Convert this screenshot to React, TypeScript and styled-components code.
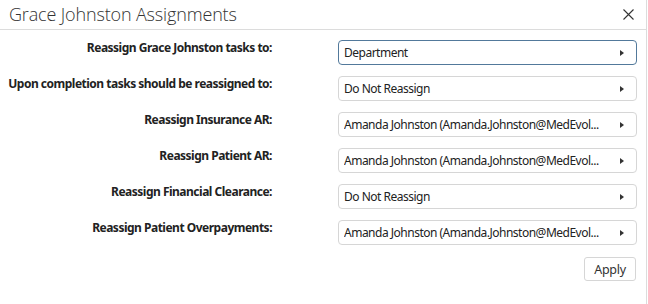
import React from 'react';
import styled, { createGlobalStyle } from 'styled-components';

const GlobalStyle = createGlobalStyle`
  html, body {
    margin: 0;
    padding: 0;
    background: #ffffff;
  }
  body {
    font-family: 'Noto Sans', 'Open Sans', sans-serif;
    color: #222222;
  }
`;

const Dialog = styled.div`
  width: 646px;
  height: 304px;
  background: #ffffff;
  border-right: 1px solid #dcdcdc;
  display: flex;
  flex-direction: column;
`;

const Header = styled.div`
  height: 29px;
  border-bottom: 1px solid #dcdcdc;
  display: flex;
  align-items: center;
  justify-content: space-between;
  padding: 0 12px 0 9px;
`;

const Title = styled.h1`
  margin: 0;
  font-family: 'Open Sans', 'Noto Sans', sans-serif;
  font-size: 18px;
  font-weight: 300;
  letter-spacing: -0.15px;
  color: #333333;
  line-height: 29px;
`;

const CloseButton = styled.button`
  width: 12px;
  height: 12px;
  padding: 0;
  border: none;
  background: none;
  display: flex;
  align-items: center;
  justify-content: center;
  cursor: pointer;
`;

const Body = styled.div`
  display: grid;
  grid-template-columns: 264px 299px;
  column-gap: 66px;
  row-gap: 11px;
  grid-auto-rows: 25px;
  padding: 10px 0 0 8px;
`;

const Label = styled.label`
  align-self: start;
  text-align: right;
  font-size: 12px;
  font-weight: 700;
  letter-spacing: -0.5px;
  line-height: 16px;
  color: #222222;
  white-space: nowrap;
`;

const Select = styled.div<{ $focused?: boolean }>`
  box-sizing: border-box;
  height: 25px;
  border: 1px solid ${p => (p.$focused ? '#52799b' : '#d6d6d6')};
  border-radius: 4px;
  display: flex;
  align-items: center;
  padding: 0 12px 0 5px;
  font-size: 12px;
  letter-spacing: -0.5px;
  color: #222222;
  cursor: pointer;
`;

const SelectText = styled.span`
  flex: 1;
  overflow: hidden;
  white-space: nowrap;
  text-overflow: ellipsis;
`;

const Arrow = styled.span`
  width: 0;
  height: 0;
  border-top: 3px solid transparent;
  border-bottom: 3px solid transparent;
  border-left: 4px solid #333333;
  margin-left: 6px;
`;

const Footer = styled.div`
  display: flex;
  justify-content: flex-end;
  padding: 12px 10px 0 0;
`;

const ApplyButton = styled.button`
  box-sizing: border-box;
  width: 52px;
  height: 24px;
  border: 1px solid #d6d6d6;
  border-radius: 3px;
  background: #ffffff;
  font-family: 'Noto Sans', 'Open Sans', sans-serif;
  font-size: 12.5px;
  letter-spacing: -0.3px;
  color: #333333;
  padding: 0;
  cursor: pointer;
`;

const rows = [
  { label: 'Reassign Grace Johnston tasks to:', value: 'Department', focused: true },
  { label: 'Upon completion tasks should be reassigned to:', value: 'Do Not Reassign' },
  { label: 'Reassign Insurance AR:', value: 'Amanda Johnston (Amanda.Johnston@MedEvol...' },
  { label: 'Reassign Patient AR:', value: 'Amanda Johnston (Amanda.Johnston@MedEvol...' },
  { label: 'Reassign Financial Clearance:', value: 'Do Not Reassign' },
  { label: 'Reassign Patient Overpayments:', value: 'Amanda Johnston (Amanda.Johnston@MedEvol...' },
];

const App: React.FC = () => (
  <>
    <GlobalStyle />
    <Dialog>
      <Header>
        <Title>Grace Johnston Assignments</Title>
        <CloseButton aria-label="Close">
          <svg width="11" height="11" viewBox="0 0 11 11">
            <path d="M0.5 0.5 L10.5 10.5 M10.5 0.5 L0.5 10.5" stroke="#333" strokeWidth="1.1" />
          </svg>
        </CloseButton>
      </Header>
      <Body>
        {rows.map(r => (
          <React.Fragment key={r.label}>
            <Label>{r.label}</Label>
            <Select $focused={r.focused}>
              <SelectText>{r.value}</SelectText>
              <Arrow />
            </Select>
          </React.Fragment>
        ))}
      </Body>
      <Footer>
        <ApplyButton>Apply</ApplyButton>
      </Footer>
    </Dialog>
  </>
);

export default App;
